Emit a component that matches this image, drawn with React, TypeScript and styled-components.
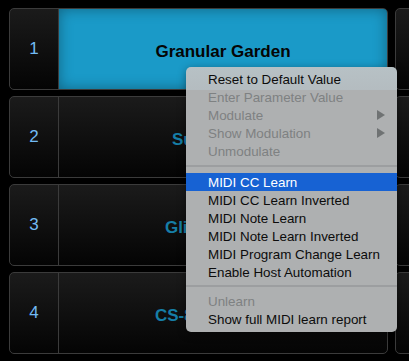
import React from 'react'
import styled, { createGlobalStyle } from 'styled-components'

const GlobalStyle = createGlobalStyle`
  html, body {
    margin: 0;
    padding: 0;
    background: #000;
    overflow: hidden;
  }
  body {
    font-family: "Liberation Sans", Arial, sans-serif;
  }
`

const Page = styled.div`
  position: relative;
  width: 409px;
  height: 361px;
  overflow: hidden;
  padding: 8px 0 0 9px;
  box-sizing: border-box;
`

const Columns = styled.div`
  display: grid;
  grid-template-columns: 379px 379px;
  column-gap: 7px;
`

const Column = styled.div`
  display: flex;
  flex-direction: column;
  gap: 6px;
`

const Row = styled.div`
  display: flex;
  height: 82px;
  border: 1px solid #3b3b3b;
  border-radius: 5px;
  box-sizing: border-box;
  overflow: hidden;
  background: linear-gradient(#1b1b1b, #040404);
`

const NumCell = styled.div`
  width: 48px;
  flex: none;
  display: flex;
  align-items: center;
  justify-content: center;
  border-right: 1px solid #3b3b3b;
  color: #72bbf4;
  font-size: 17px;
`

const NameCell = styled.div<{ active?: boolean }>`
  flex: 1;
  display: flex;
  align-items: center;
  justify-content: center;
  font-size: 17px;
  font-weight: bold;
  color: ${({ active }) => (active ? '#050505' : '#167ea7')};
  background: ${({ active }) => (active ? '#1a9ac8' : 'transparent')};
  box-shadow: ${({ active }) => (active ? 'inset 0 0 14px rgba(0,0,0,0.35)' : 'none')};
  padding-top: 5px;
`

const Menu = styled.div`
  position: absolute;
  left: 186px;
  top: 67px;
  width: 211px;
  padding: 3px 0 4px;
  background: linear-gradient(#b7c1c5 0, #b4bcc0 23px, #aeb0b1 23px);
  border-radius: 5px;
  box-shadow: 0 2px 8px rgba(0, 0, 0, 0.4);
  font-size: 13.4px;
`

const Item = styled.div<{ disabled?: boolean; selected?: boolean }>`
  display: flex;
  align-items: center;
  justify-content: space-between;
  height: 18px;
  padding: 0 12px 0 22px;
  color: ${({ disabled, selected }) => (selected ? '#fff' : disabled ? '#7e8182' : '#0c0c0c')};
  background: ${({ selected }) => (selected ? '#1762d3' : 'transparent')};
`

const Separator = styled.div<{ tight?: boolean }>`
  height: 2px;
  margin: ${({ tight }) => (tight ? '4px 0 5px' : '5px 0 6px')};
  background: #9c9ea0;
`

const Arrow = () => (
  <svg width="8" height="10" viewBox="0 0 8 10">
    <path d="M0 0 L8 5 L0 10 Z" fill="#6f7273" />
  </svg>
)

const leftRows = [
  { n: 1, name: 'Granular Garden', active: true },
  { n: 2, name: 'Sunset Pads' },
  { n: 3, name: 'Glitch Rhythm' },
  { n: 4, name: 'CS-80 Brass Pad' },
]

const rightRows = [5, 6, 7, 8]

type MenuEntry =
  | { label: string; disabled?: boolean; selected?: boolean; sub?: boolean }
  | { sep: true; tight?: boolean }

const menu: MenuEntry[] = [
  { label: 'Reset to Default Value' },
  { label: 'Enter Parameter Value', disabled: true },
  { label: 'Modulate', disabled: true, sub: true },
  { label: 'Show Modulation', disabled: true, sub: true },
  { label: 'Unmodulate', disabled: true },
  { sep: true },
  { label: 'MIDI CC Learn', selected: true },
  { label: 'MIDI CC Learn Inverted' },
  { label: 'MIDI Note Learn' },
  { label: 'MIDI Note Learn Inverted' },
  { label: 'MIDI Program Change Learn' },
  { label: 'Enable Host Automation' },
  { sep: true, tight: true },
  { label: 'Unlearn', disabled: true },
  { label: 'Show full MIDI learn report' },
]

const App = () => {
  return (
    <Page>
      <GlobalStyle />
      <Columns>
        <Column>
          {leftRows.map((r) => (
            <Row key={r.n}>
              <NumCell>{r.n}</NumCell>
              <NameCell active={r.active}>{r.name}</NameCell>
            </Row>
          ))}
        </Column>
        <Column>
          {rightRows.map((n) => (
            <Row key={n}>
              <NumCell />
              <NameCell />
            </Row>
          ))}
        </Column>
      </Columns>
      <Menu>
        {menu.map((m, i) =>
          'sep' in m ? (
            <Separator key={i} tight={m.tight} />
          ) : (
            <Item key={i} disabled={m.disabled} selected={m.selected}>
              <span>{m.label}</span>
              {m.sub && <Arrow />}
            </Item>
          )
        )}
      </Menu>
    </Page>
  )
}

export default App
